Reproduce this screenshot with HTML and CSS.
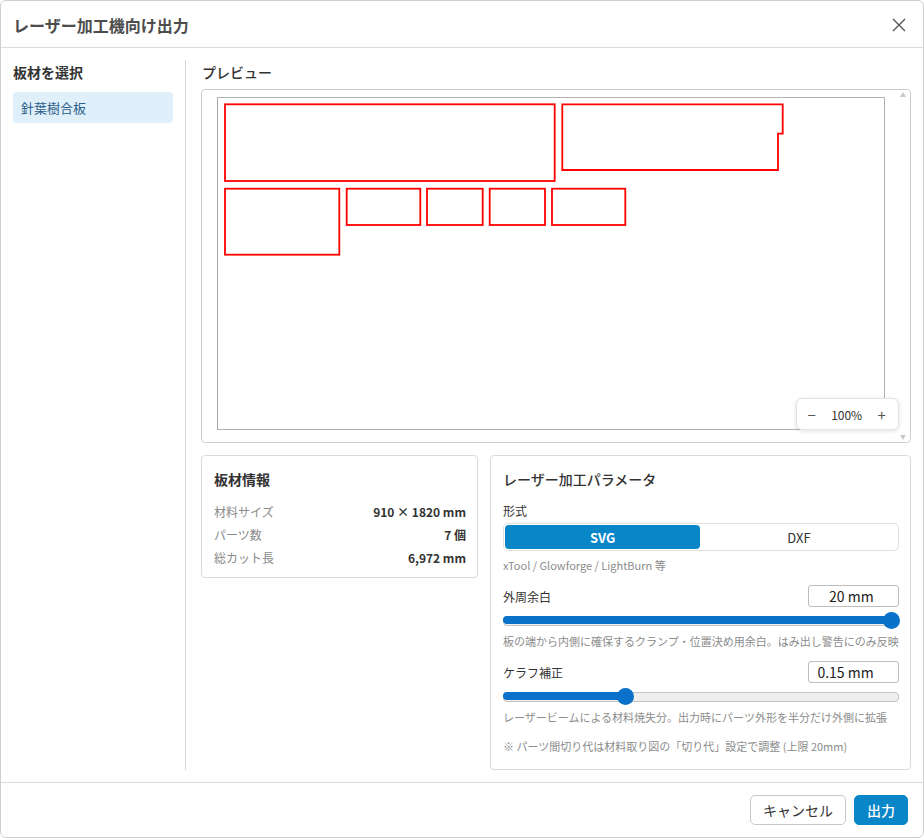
FILE: index.html
```html
<!DOCTYPE html>
<html lang="ja">
<head>
    <meta charset="UTF-8">
    <meta name="viewport" content="width=device-width, initial-scale=1.0">
    <title>レーザー加工機向け出力</title>
    <link rel="stylesheet" href="styles.css">
</head>
<body>
    <div class="dialog">
        <!-- ヘッダー -->
        <div class="dialog-header">
            <h1>レーザー加工機向け出力</h1>
            <button class="close-btn" aria-label="閉じる">
                <svg width="14" height="14" viewBox="0 0 14 14"><path d="M1 1 L13 13 M13 1 L1 13" stroke="#555" stroke-width="1.4" fill="none"/></svg>
            </button>
        </div>

        <div class="dialog-body">
            <!-- 板材リスト -->
            <div class="sidebar">
                <h2>板材を選択</h2>
                <div class="sheet-item active">針葉樹合板</div>
            </div>

            <div class="main">
                <h2>プレビュー</h2>
                <div class="preview">
                    <div class="preview-canvas">
                        <div class="sheet">
                            <svg width="666" height="331" viewBox="1 1 666 331">
                                <g fill="none" stroke="#ff0000" stroke-width="1.8">
                                    <rect x="8" y="7.3" width="329.7" height="76.7"/>
                                    <path d="M345.3 7.3 H565.7 V36.7 H561 V73 H345.3 Z"/>
                                    <rect x="8" y="91.7" width="114.3" height="66"/>
                                    <rect x="129.7" y="91.7" width="73.6" height="36.3"/>
                                    <rect x="210" y="91.7" width="55.7" height="36.3"/>
                                    <rect x="272.7" y="91.7" width="55.3" height="36.3"/>
                                    <rect x="335" y="91.7" width="73.3" height="36.3"/>
                                </g>
                            </svg>
                        </div>
                    </div>
                    <div class="scroll-rail">
                        <span class="arrow-up"></span>
                        <span class="arrow-down"></span>
                    </div>
                    <div class="zoom-ctrl">
                        <span class="zoom-btn">−</span>
                        <span class="zoom-value">100%</span>
                        <span class="zoom-btn">+</span>
                    </div>
                </div>

                <div class="panels">
                    <div class="card info-card">
                        <h3>板材情報</h3>
                        <div class="info-row"><span>材料サイズ</span><strong>910 × 1820 mm</strong></div>
                        <div class="info-row"><span>パーツ数</span><strong>7 個</strong></div>
                        <div class="info-row"><span>総カット長</span><strong>6,972 mm</strong></div>
                    </div>

                    <div class="card param-card">
                        <h3 class="medium">レーザー加工パラメータ</h3>
                        <div class="field-label">形式</div>
                        <div class="segmented">
                            <div class="seg active">SVG</div>
                            <div class="seg">DXF</div>
                        </div>
                        <p class="hint first">xTool / Glowforge / LightBurn 等</p>

                        <div class="param-row">
                            <span class="field-label">外周余白</span>
                            <div class="value-box">20 mm</div>
                        </div>
                        <div class="slider">
                            <div class="slider-fill" style="width: 100%"></div>
                            <div class="slider-thumb" style="left: 100%"></div>
                        </div>
                        <p class="hint">板の端から内側に確保するクランプ・位置決め用余白。はみ出し警告にのみ反映</p>

                        <div class="param-row">
                            <span class="field-label">ケラフ補正</span>
                            <div class="value-box">0.15 mm</div>
                        </div>
                        <div class="slider">
                            <div class="slider-fill" style="width: 30.9%"></div>
                            <div class="slider-thumb" style="left: 30.9%"></div>
                        </div>
                        <p class="hint">レーザービームによる材料焼失分。出力時にパーツ外形を半分だけ外側に拡張</p>
                        <p class="hint note">※ パーツ間切り代は材料取り図の「切り代」設定で調整 (上限 20mm)</p>
                    </div>
                </div>
            </div>
        </div>

        <div class="dialog-footer">
            <button class="btn cancel">キャンセル</button>
            <button class="btn primary">出力</button>
        </div>
    </div>
</body>
</html>
```

FILE: styles.css
```css
* {
    box-sizing: border-box;
}
body {
    margin: 0;
    font-family: "Noto Sans CJK JP", "Noto Sans", sans-serif;
    color: #333;
    background: #fff;
}
.dialog {
    width: 924px;
    height: 838px;
    border: 1px solid #cfcfcf;
    border-radius: 6px;
    display: flex;
    flex-direction: column;
    overflow: hidden;
}
.dialog-header {
    height: 47px;
    border-bottom: 1px solid #dcdcdc;
    display: flex;
    align-items: center;
    justify-content: space-between;
    padding: 0 14px 0 12px;
    flex-shrink: 0;
}
.dialog-header h1 {
    margin: 0;
    font-size: 16px;
    font-weight: 700;
    color: #4d4d4d;
    line-height: 22px;
    padding-top: 1px;
}
.close-btn {
    border: none;
    background: none;
    padding: 0;
    width: 20px;
    height: 20px;
    display: flex;
    align-items: center;
    justify-content: center;
    margin-top: 1px;
}
.dialog-body {
    flex: 1;
    display: flex;
    padding: 12px 0;
    min-height: 0;
}
.sidebar {
    width: 185px;
    flex-shrink: 0;
    border-right: 1px solid #d6d6d6;
    padding: 0 12px;
}
h2 {
    margin: 0;
    font-size: 14px;
    line-height: 24px;
    font-weight: 700;
    color: #333;
}
.main h2 {
    font-weight: 500;
    padding-left: 1px;
}
.sheet-item {
    margin-top: 8px;
    height: 31px;
    line-height: 31px;
    padding: 0 8px;
    font-size: 13px;
    border-radius: 4px;
    color: #2d5f88;
}
.sheet-item.active {
    background-color: #dff0fb;
}
.main {
    flex: 1;
    padding: 0 13px 0 15px;
    display: flex;
    flex-direction: column;
}
.preview {
    position: relative;
    margin-top: 5px;
    height: 354px;
    border: 1px solid #cdcdcd;
    border-radius: 4px;
    display: flex;
    flex-shrink: 0;
}
.preview-canvas {
    flex: 1;
    padding: 7px 0 0 15px;
}
.sheet {
    width: 668px;
    height: 333px;
    border: 1px solid #b2b2b2;
    border-left-color: #a8a8a8;
    background: #fff;
}
.sheet svg {
    display: block;
}
.scroll-rail {
    width: 14px;
    display: flex;
    flex-direction: column;
    justify-content: space-between;
    align-items: center;
    padding: 2px 0 2px;
}
.arrow-up, .arrow-down {
    width: 0;
    height: 0;
    border-left: 3.5px solid transparent;
    border-right: 3.5px solid transparent;
}
.arrow-up {
    border-bottom: 5px solid #c9c9c9;
}
.arrow-down {
    border-top: 5px solid #c9c9c9;
}
.zoom-ctrl {
    position: absolute;
    right: 11px;
    bottom: 12px;
    width: 103px;
    height: 32px;
    background: #fff;
    border: 1px solid #e4e4e4;
    border-radius: 6px;
    box-shadow: 0 1px 4px rgba(0, 0, 0, 0.13);
    display: flex;
    align-items: center;
    justify-content: space-between;
    padding: 0 10px 0 9px;
    font-size: 12px;
    color: #333;
}
.zoom-btn {
    font-size: 15px;
    color: #555;
    width: 12px;
    text-align: center;
}
.zoom-value {
    font-size: 12px;
}
.panels {
    margin-top: 12px;
    flex: 1;
    display: flex;
    gap: 12px;
    align-items: flex-start;
}
.card {
    border: 1px solid #dadada;
    border-radius: 4px;
}
.card h3 {
    margin: 0;
    font-size: 14px;
    line-height: 20px;
    font-weight: 700;
    color: #333;
}
.card h3.medium {
    font-weight: 500;
}
.info-card {
    width: 277px;
    padding: 13px 11px 8px 12px;
}
.info-card h3 {
    margin-bottom: 11px;
}
.info-row {
    display: flex;
    justify-content: space-between;
    height: 23px;
    line-height: 23px;
    font-size: 12px;
}
.info-row span {
    color: #8a8a8a;
}
.info-row strong {
    color: #333;
    font-weight: 700;
}
.param-card {
    flex: 1;
    align-self: stretch;
    padding: 13px 11px 12px 12px;
}
.field-label {
    font-size: 12px;
    line-height: 18px;
    color: #333;
}
.param-card h3 + .field-label {
    margin-top: 13px;
}
.segmented {
    margin-top: 3px;
    height: 28px;
    border: 1px solid #e0e0e0;
    border-radius: 5px;
    padding: 1px;
    display: flex;
    gap: 1px;
}
.seg {
    flex: 1;
    display: flex;
    align-items: center;
    justify-content: center;
    font-size: 13px;
    color: #333;
    border-radius: 4px;
}
.seg.active {
    background-color: #0986c8;
    color: #fff;
    font-weight: 700;
}
.hint {
    margin: 5px 0 0;
    font-size: 11px;
    line-height: 16px;
    color: #8c8c8c;
    white-space: nowrap;
}
.hint.first {
    margin-top: 6px;
}
.hint.note {
    margin-top: 13px;
}
.param-row {
    margin-top: 12px;
    height: 22px;
    display: flex;
    align-items: center;
    justify-content: space-between;
}
.param-row .field-label {
    padding-top: 2px;
}
.value-box {
    width: 91px;
    height: 22px;
    border: 1px solid #bdbdbd;
    border-radius: 3px;
    font-size: 14px;
    line-height: 20px;
    text-align: right;
    padding-right: 24px;
    color: #222;
}
.slider {
    position: relative;
    margin-top: 5px;
    height: 16px;
}
.slider::before {
    content: "";
    position: absolute;
    left: 0;
    right: 0;
    top: 4px;
    height: 8px;
    background: #efefef;
    border: 1px solid #c4c4c4;
    border-radius: 4px;
}
.slider-fill {
    position: absolute;
    left: 0;
    top: 4px;
    height: 8px;
    background: #0a72ca;
    border-radius: 4px;
}
.slider-thumb {
    position: absolute;
    top: -0.5px;
    width: 17px;
    height: 17px;
    margin-left: -8.5px;
    border-radius: 50%;
    background: #0a72ca;
}
.slider-thumb[style*="100%"] {
    margin-left: -16px;
}
.dialog-footer {
    height: 55px;
    border-top: 1px solid #dcdcdc;
    display: flex;
    align-items: center;
    justify-content: flex-end;
    gap: 8px;
    padding: 0 15px 0 0;
    flex-shrink: 0;
}
.btn {
    height: 30px;
    padding: 0;
    border: 1px solid #c8c8c8;
    border-radius: 5px;
    background: #fff;
    font-family: "Noto Sans CJK JP", "Noto Sans", sans-serif;
    font-size: 14px;
    color: #333;
}
.btn.cancel {
    width: 96px;
}
.btn.primary {
    width: 54px;
    background: #0986c8;
    border-color: #0986c8;
    color: #fff;
    font-weight: 500;
}
```
